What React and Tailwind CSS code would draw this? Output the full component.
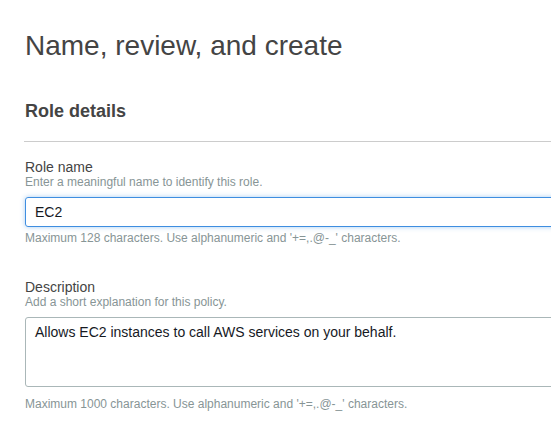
import React, { useState } from "react";

export default function App() {
  const [roleName, setRoleName] = useState("EC2");
  const [description, setDescription] = useState(
    "Allows EC2 instances to call AWS services on your behalf."
  );

  return (
    <div className="w-full h-screen overflow-hidden bg-white font-['Liberation_Sans',Arial,sans-serif]">
      <div className="w-[760px] pl-[25px] pt-[30px]">
        {/* page title */}
        <h1 className="text-[28px] leading-[32px] text-[#444] font-normal">
          Name, review, and create
        </h1>

        {/* section heading */}
        <h2 className="mt-[38px] text-[18px] leading-[22px] font-bold text-[#444]">
          Role details
        </h2>
        <div className="mt-[19px] -ml-px border-t border-[#ccc]" />

        {/* role name */}
        <label className="block mt-[17px] text-[14px] leading-[16px] text-[#444]">
          Role name
        </label>
        <p className="text-[12px] leading-[15px] text-[#879596]">
          Enter a meaningful name to identify this role.
        </p>
        <input
          type="text"
          className="block mt-[7px] w-full h-[30px] px-[9px] text-[14px] text-[#16191f] border border-[#3f8ee0] rounded-[3px] outline-none shadow-[0_0_5px_rgba(63,142,224,0.45)]"
          value={roleName}
          onChange={(e) => setRoleName(e.target.value)}
        />
        <p className="mt-[4px] text-[12px] leading-[15px] text-[#879596]">
          Maximum 128 characters. Use alphanumeric and '+=,.@-_' characters.
        </p>

        {/* description */}
        <label className="block mt-[33px] text-[14px] leading-[16px] text-[#444]">
          Description
        </label>
        <p className="text-[12px] leading-[15px] text-[#879596]">
          Add a short explanation for this policy.
        </p>
        <textarea
          className="block mt-[7px] w-full h-[70px] px-[9px] pt-[5px] text-[14px] leading-[18px] text-[#16191f] border border-[#aab7b8] rounded-[3px] outline-none resize-none"
          value={description}
          onChange={(e) => setDescription(e.target.value)}
        />
        <p className="mt-[10px] text-[12px] leading-[15px] text-[#879596]">
          Maximum 1000 characters. Use alphanumeric and '+=,.@-_' characters.
        </p>
      </div>
    </div>
  );
}
